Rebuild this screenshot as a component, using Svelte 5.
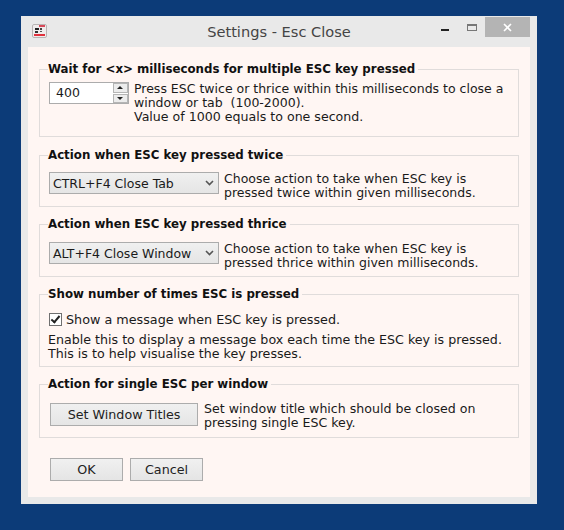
<script>
  let showMessage = $state(true);
</script>

<div class="desktop">
  <div class="window">
    <header class="titlebar">
      <svg class="appicon" width="15" height="14" viewBox="0 0 15 14">
        <rect x="0.5" y="0.5" width="14" height="13" rx="1.5" fill="#efecec" stroke="#b9b4b4" />
        <rect x="7" y="1" width="6" height="2" fill="#d84a5a" />
        <rect x="3" y="4" width="4" height="2" fill="#222" />
        <rect x="8" y="4" width="2" height="2" fill="#444" />
        <rect x="3" y="7" width="3" height="2" fill="#333" />
        <rect x="8" y="7" width="2" height="1" fill="#555" />
        <rect x="2" y="10" width="11" height="2" fill="#e0303c" />
      </svg>
      <span class="title">Settings - Esc Close</span>
      <div class="controls">
        <span class="min"></span>
        <span class="max"></span>
        <span class="close">
          <svg width="9" height="9" viewBox="0 0 9 9">
            <path d="M1 1 L8 8 M8 1 L1 8" stroke="#fff" stroke-width="1.6" />
          </svg>
        </span>
      </div>
    </header>

    <main class="client">
      <fieldset class="first">
        <legend>Wait for &lt;x&gt; milliseconds for multiple ESC key pressed</legend>
        <div class="row">
          <div class="spinner">
            <span class="value">400</span>
            <div class="arrows">
              <span class="up"></span>
              <span class="down"></span>
            </div>
          </div>
          <p>Press ESC twice or thrice within this milliseconds to close a<br />window or tab&nbsp; (100-2000).<br /><span class="wide">Value of 1000 equals to one second.</span></p>
        </div>
      </fieldset>

      <fieldset class="second">
        <legend>Action when ESC key pressed twice</legend>
        <div class="row">
          <div class="combo"><span>CTRL+F4 Close Tab</span><svg width="9" height="6" viewBox="0 0 9 6"><path d="M1 1 L4.5 4.5 L8 1" fill="none" stroke="#555" stroke-width="1.6" /></svg></div>
          <p>Choose action to take when ESC key is<br />pressed twice within given milliseconds.</p>
        </div>
      </fieldset>

      <fieldset class="third">
        <legend>Action when ESC key pressed thrice</legend>
        <div class="row">
          <div class="combo"><span>ALT+F4 Close Window</span><svg width="9" height="6" viewBox="0 0 9 6"><path d="M1 1 L4.5 4.5 L8 1" fill="none" stroke="#555" stroke-width="1.6" /></svg></div>
          <p>Choose action to take when ESC key is<br />pressed thrice within given milliseconds.</p>
        </div>
      </fieldset>

      <fieldset class="fourth">
        <legend>Show number of times ESC is pressed</legend>
        <label class="check">
          <input type="checkbox" bind:checked={showMessage} />
          <span>Show a message when ESC key is pressed.</span>
        </label>
        <p class="note">Enable this to display a message box each time the ESC key is pressed.<br />This is to help visualise the key presses.</p>
      </fieldset>

      <fieldset class="fifth">
        <legend>Action for single ESC per window</legend>
        <div class="row">
          <button class="titles">Set Window Titles</button>
          <p>Set window title which should be closed on<br />pressing single ESC key.</p>
        </div>
      </fieldset>

      <div class="actions">
        <button>OK</button>
        <button>Cancel</button>
      </div>
    </main>
  </div>
</div>

<style>
  :global(body) {
    margin: 0;
    background: #0c3b78;
  }

  .desktop {
    width: 564px;
    height: 530px;
    padding: 16px 0 0 21px;
    box-sizing: border-box;
    overflow: hidden;
    font-family: "DejaVu Sans", sans-serif;
    font-size: 12.5px;
    color: #1a1a1a;
  }

  .window {
    width: 516px;
    height: 488px;
    background: #e9e9e9;
    display: flex;
    flex-direction: column;
  }

  .titlebar {
    height: 31px;
    flex: none;
    display: flex;
    align-items: flex-start;
    position: relative;
  }

  .appicon {
    margin: 8px 0 0 11px;
  }

  .title {
    position: absolute;
    left: 0;
    right: 0;
    top: 7px;
    text-align: center;
    font-size: 14.6px;
    line-height: 18px;
    color: #444;
  }

  .controls {
    margin-left: auto;
    margin-right: 7px;
    display: flex;
    align-items: flex-start;
  }

  .min {
    width: 8px;
    height: 2px;
    margin: 13px 18px 0 0;
    background: #222;
  }

  .max {
    width: 8px;
    height: 4px;
    border: 1px solid #777;
    border-top-width: 2px;
    margin: 8px 8px 0 0;
  }

  .close {
    width: 45px;
    height: 20px;
    margin-top: 1px;
    background: #b4b4b4;
    display: flex;
    align-items: center;
    justify-content: center;
  }

  .client {
    flex: 1;
    margin: 0 7px 7px;
    background: #fff6f3;
    padding: 0 11px;
    display: flex;
    flex-direction: column;
  }

  fieldset {
    margin: 0;
    padding: 0 8px;
    border: 1px solid #e0dcdb;
    min-width: 0;
    box-sizing: border-box;
  }

  legend {
    padding: 0 3px 0 0;
    font-size: 11.8px;
    font-weight: bold;
    color: #111;
    line-height: 15px;
  }

  .first {
    margin-top: 15px;
    height: 75px;
  }

  .second {
    margin-top: 11px;
    height: 59px;
  }

  .third {
    margin-top: 10px;
    height: 60px;
  }

  .fourth {
    margin-top: 10px;
    height: 80px;
  }

  .fifth {
    margin-top: 10px;
    height: 61px;
  }

  .row {
    display: flex;
    align-items: flex-start;
    gap: 5px;
  }

  .first .row {
    margin-top: 5px;
  }

  .second .row {
    margin-top: 9px;
  }

  .third .row {
    margin-top: 10px;
  }

  .fifth .row {
    margin-top: 10px;
    gap: 6px;
  }

  p {
    margin: 0;
    line-height: 14px;
    white-space: nowrap;
  }

  .wide {
    font-size: 12.6px;
  }

  .fifth p {
    font-size: 12.6px;
  }

  .spinner {
    width: 80px;
    height: 22px;
    margin-left: 1px;
    flex: none;
    border: 1px solid #acacac;
    background: #fff;
    box-sizing: border-box;
    display: flex;
    justify-content: space-between;
  }

  .value {
    padding-left: 6px;
    line-height: 20px;
  }

  .arrows {
    display: flex;
    flex-direction: column;
    width: 15px;
    gap: 1px;
  }

  .up,
  .down {
    flex: 1;
    border: 1px solid #b5b5b5;
    background: #ececec;
    position: relative;
  }

  .up::after,
  .down::after {
    content: "";
    position: absolute;
    left: 3px;
    top: 2px;
    border: 3px solid transparent;
  }

  .up::after {
    border-top: 0;
    border-bottom: 3px solid #222;
  }

  .down::after {
    border-bottom: 0;
    border-top: 3px solid #222;
  }

  .combo {
    width: 170px;
    height: 22px;
    margin-left: 1px;
    flex: none;
    box-sizing: border-box;
    border: 1px solid #acacac;
    background: linear-gradient(#f0f0f0, #e5e5e5);
    display: flex;
    align-items: center;
    justify-content: space-between;
    padding: 0 4px 0 3px;
  }

  .check {
    display: flex;
    align-items: center;
    gap: 4px;
    margin: 9px 0 0 1px;
    height: 16px;
    font-size: 12.75px;
  }

  .check input {
    appearance: none;
    width: 13px;
    height: 13px;
    margin: 0;
    border: 1px solid #707070;
    background: #fff;
    position: relative;
    box-sizing: border-box;
  }

  .check input:checked::after {
    content: "";
    position: absolute;
    left: 3px;
    top: 0;
    width: 3px;
    height: 7px;
    border: solid #222;
    border-width: 0 2px 2px 0;
    transform: rotate(40deg);
  }

  .note {
    margin: 6px 0 0 0;
    font-size: 12.65px;
  }

  button {
    font: inherit;
    font-size: 12.7px;
    color: #222;
    width: 73px;
    height: 23px;
    padding: 0;
    border: 1px solid #acacac;
    background: linear-gradient(#f0f0f0, #e5e5e5);
  }

  .titles {
    width: 148px;
    margin: 1px 0 0 2px;
    flex: none;
  }

  .actions {
    display: flex;
    gap: 7px;
    margin: 20px 0 0 11px;
  }
</style>
